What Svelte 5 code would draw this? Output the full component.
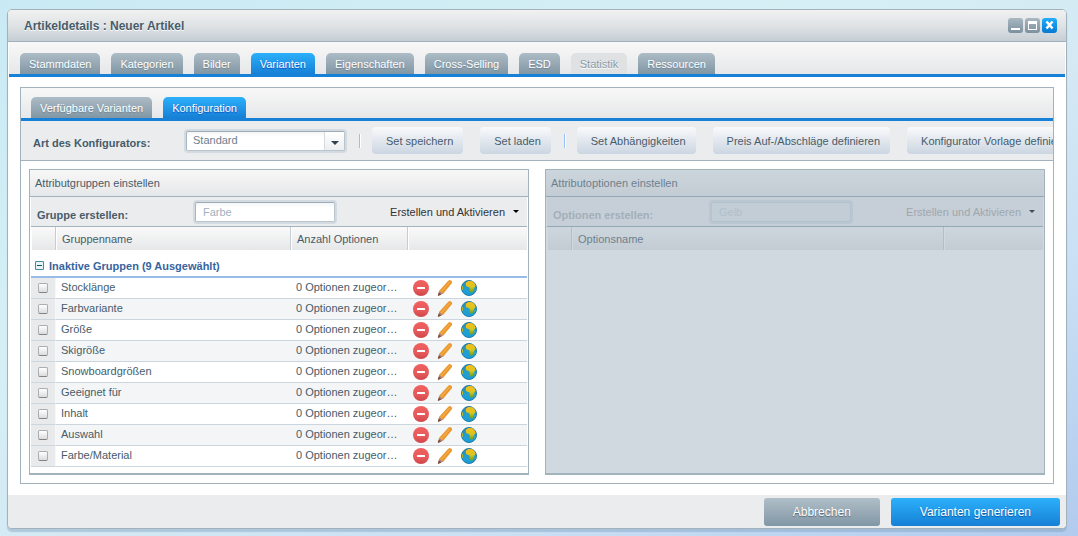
<script>
  const tabs = [
    { label: 'Stammdaten' },
    { label: 'Kategorien' },
    { label: 'Bilder' },
    { label: 'Varianten' },
    { label: 'Eigenschaften' },
    { label: 'Cross-Selling' },
    { label: 'ESD' },
    { label: 'Statistik', disabled: true },
    { label: 'Ressourcen' }
  ];
  const subTabs = ['Verfügbare Varianten', 'Konfiguration'];

  const groups = [
    'Stocklänge',
    'Farbvariante',
    'Größe',
    'Skigröße',
    'Snowboardgrößen',
    'Geeignet für',
    'Inhalt',
    'Auswahl',
    'Farbe/Material'
  ];

  let activeTab = $state('Varianten');
  let activeSubTab = $state('Konfiguration');
  let configurator = $state('Standard');
  let expanded = $state(true);
</script>

<svelte:head>
  <title>Artikeldetails : Neuer Artikel</title>
</svelte:head>

<!-- Shared gradients for the row icons -->
<svg class="defs" width="0" height="0" aria-hidden="true">
  <defs>
    <linearGradient id="red" x1="0" y1="0" x2="0" y2="1">
      <stop offset="0" stop-color="#f0605f" />
      <stop offset="0.6" stop-color="#e65a5c" />
      <stop offset="1" stop-color="#cf4549" />
    </linearGradient>
    <linearGradient id="sea" x1="0" y1="0" x2="0" y2="1">
      <stop offset="0" stop-color="#2683a8" />
      <stop offset="0.5" stop-color="#259fcb" />
      <stop offset="1" stop-color="#169ee0" />
    </linearGradient>
    <linearGradient id="land" x1="0" y1="0" x2="0" y2="1">
      <stop offset="0" stop-color="#f7bd1c" />
      <stop offset="0.5" stop-color="#d9c51d" />
      <stop offset="1" stop-color="#4f9a2d" />
    </linearGradient>
  </defs>
</svg>

<main class="window">
  <header class="window__header">
    <h1 class="window__title">Artikeldetails : Neuer Artikel</h1>
    <div class="window__tools">
      <button class="tool" aria-label="Minimieren">
        <svg width="15" height="15" viewBox="0 0 15 15"><path d="M3 10h9v2H3z" fill="#fff" /></svg>
      </button>
      <button class="tool" aria-label="Maximieren">
        <svg width="15" height="15" viewBox="0 0 15 15"><path fill-rule="evenodd" d="M3 3h9v9H3zM4 6v5h7V6z" fill="#fff" /></svg>
      </button>
      <button class="tool tool--close" aria-label="Schließen">
        <svg width="15" height="15" viewBox="0 0 15 15"><path d="M4.500 3.500l6 7M10.500 3.500l-6 7" stroke="#fff" stroke-width="2.500" /></svg>
      </button>
    </div>
  </header>

  <div class="tabs" role="tablist">
    {#each tabs as tab}
      <button
        class="tab"
        class:tab--active={activeTab === tab.label}
        role="tab"
        aria-selected={activeTab === tab.label}
        disabled={tab.disabled}
        onclick={() => (activeTab = tab.label)}>{tab.label}</button>
    {/each}
  </div>

  <section class="content">
    <div class="tabs tabs--inner" role="tablist">
      {#each subTabs as label}
        <button
          class="tab"
          class:tab--active={activeSubTab === label}
          role="tab"
          aria-selected={activeSubTab === label}
          onclick={() => (activeSubTab = label)}>{label}</button>
      {/each}
    </div>

    <div class="toolbar">
      <label class="label label--wide" for="configurator">Art des Konfigurators:</label>
      <div class="combo">
        <select id="configurator" class="field combo__select" bind:value={configurator}>
          <option>Standard</option>
          <option>Auswahl</option>
          <option>Bild</option>
        </select>
        <span class="combo__trigger"><i class="arrow arrow--large"></i></span>
      </div>
      <span class="separator"></span>
      <button class="button">Set speichern</button>
      <button class="button">Set laden</button>
      <span class="separator"></span>
      <button class="button">Set Abhängigkeiten</button>
      <button class="button">Preis Auf-/Abschläge definieren</button>
      <button class="button">Konfigurator Vorlage definieren</button>
    </div>

    <div class="panels">
      <section class="panel">
        <h2 class="panel__title">Attributgruppen einstellen</h2>
        <div class="panel__bar">
          <label class="label" for="group">Gruppe erstellen:</label>
          <input id="group" class="field" type="text" placeholder="Farbe" />
          <button class="create">Erstellen und Aktivieren <i class="arrow"></i></button>
        </div>
        <table class="grid">
          <colgroup>
            <col class="col-check" />
            <col />
            <col class="col-count" />
            <col class="col-actions" />
          </colgroup>
          <thead>
            <tr>
              <th></th>
              <th>Gruppenname</th>
              <th>Anzahl Optionen</th>
              <th></th>
            </tr>
          </thead>
          <tbody>
            <tr>
              <td class="grid__group" colspan="4">
                <button class="toggle" aria-expanded={expanded} onclick={() => (expanded = !expanded)}>
                  <svg width="9" height="9" viewBox="0 0 9 9">
                    <path d="M.5.5h8v8h-8z" fill="#e6f4f6" stroke="#4b8a9c" />
                    <path d="M2 4h5v1H2z" fill="#1f5266" />
                    {#if !expanded}<path d="M4 2h1v5H4z" fill="#1f5266" />{/if}
                  </svg>
                  Inaktive Gruppen (9 Ausgewählt)
                </button>
              </td>
            </tr>
            {#if expanded}
              {#each groups as group}
                <tr class="row">
                  <td class="row__check"><input type="checkbox" class="check" aria-label={group} /></td>
                  <td class="row__text">{group}</td>
                  <td class="row__text">0 Optionen zugeordnet</td>
                  <td class="row__actions">
                    <div class="actions">
                      <button class="icon" aria-label="Löschen">
                        <svg width="16" height="16" viewBox="0 0 16 16">
                          <circle cx="8" cy="8" r="8" fill="url(#red)" />
                          <rect x="4" y="7" width="8" height="2" rx=".5" fill="#fff" />
                        </svg>
                      </button>
                      <button class="icon" aria-label="Bearbeiten">
                        <svg width="16" height="16" viewBox="0 0 16 16">
                          <path d="M11.300.8Q12.600-.4 14 .5T15 3L6.200 13.800 2.200 10.800z" fill="#ea982e" />
                          <path d="M12.800 1.800L4 12" stroke="#f3ab48" stroke-width="1.200" />
                          <path d="M2.200 10.800l4 3L1 16z" fill="#b08070" />
                          <path d="M1.600 12.500l2.600 2.100L.8 16z" fill="#7a4a3c" />
                        </svg>
                      </button>
                      <button class="icon" aria-label="Übersetzen">
                        <svg width="16" height="16" viewBox="0 0 16 16">
                          <circle cx="8" cy="8" r="7.500" fill="url(#sea)" stroke="#1f7ba5" />
                          <path d="M5 2.500L7.500 1l4 .3 2.200 2.200.9 2.200-1 1.500-1.100 2.300-.6 2.500-1.900 1.300-1.200-2-.1-3.500L7.500 7 5.300 6.300 4.700 4.400z" fill="url(#land)" />
                          <path d="M1 5.500l1 1.500v2.500L1 10zM13.500 10l1-1-.5 2.200z" fill="#b5bb2c" />
                        </svg>
                      </button>
                    </div>
                  </td>
                </tr>
              {/each}
            {/if}
          </tbody>
        </table>
      </section>

      <section class="panel panel--disabled">
        <h2 class="panel__title">Attributoptionen einstellen</h2>
        <div class="panel__bar">
          <label class="label" for="option">Optionen erstellen:</label>
          <input id="option" class="field" type="text" placeholder="Gelb" disabled />
          <button class="create" disabled><span>Erstellen und Aktivieren</span> <i class="arrow"></i></button>
        </div>
        <table class="grid">
          <colgroup>
            <col class="col-check" />
            <col />
            <col class="col-tools" />
          </colgroup>
          <thead>
            <tr>
              <th></th>
              <th>Optionsname</th>
              <th></th>
            </tr>
          </thead>
        </table>
        <div class="panel__mask"></div>
      </section>
    </div>
  </section>

  <footer class="footer">
    <button class="action">Abbrechen</button>
    <button class="action action--primary">Varianten generieren</button>
  </footer>
</main>

<style>
  :global(body) {
    min-height: 100vh;
    overflow: hidden;
    background: linear-gradient(155deg, #c9eaf4 0%, #d6eff5 35%, #d4e9f4 55%, #c9dff4 75%, #b2cbee 100%);
  }

  :global(#app) {
    display: flow-root;
  }

  .defs {
    position: absolute;
  }

  .window,
  .window button,
  .window input,
  .window select {
    box-sizing: border-box;
    font-family: 'Liberation Sans', Arial, sans-serif;
    font-size: 11px;
    color: #475c6a;
  }

  .window button {
    margin: 0;
    border: 0;
    white-space: nowrap;
    cursor: pointer;
  }

  .window button:disabled {
    cursor: default;
  }

  .window {
    margin: 9px 11px 0 7px;
    background: #fff;
    border: 1px solid #a2b1bb;
    border-radius: 5px;
    box-shadow: 0 3px 1px rgba(120, 155, 185, 0.4);
  }

  .window__header {
    display: flex;
    align-items: center;
    justify-content: space-between;
    height: 31px;
    padding: 0 9px 0 16px;
    background: linear-gradient(#f1f1f1, #dfe3e5 50%, #c5ced5);
    border-bottom: 1px solid #a2b1bb;
    border-radius: 4px 4px 0 0;
  }

  .window__title {
    margin: 0;
    font-size: 12px;
    font-weight: bold;
    text-shadow: 0 1px 0 #fff;
  }

  .window__tools {
    display: flex;
    gap: 2px;
  }

  .window .tool {
    width: 15px;
    height: 15px;
    padding: 0;
    border-radius: 3px;
    background: linear-gradient(#a9b8c2, #7b909e);
  }

  .window .tool--close {
    background: linear-gradient(#22aefa, #0878d2);
  }

  .tool svg,
  .icon svg {
    display: block;
  }

  /* Tabs */
  .tabs {
    display: flex;
    align-items: flex-end;
    gap: 11px;
    height: 32px;
    margin: 0 1px;
    padding: 0 11px;
    background: linear-gradient(#f8f8f8, #e6e7e9);
    border-bottom: 3px solid #1681d6;
  }

  .tabs--inner {
    height: 30px;
    margin: 0;
    padding: 0 10px;
  }

  .window .tab {
    height: 21px;
    padding: 0 9px;
    border-radius: 5px 5px 0 0;
    background: linear-gradient(#adbcc6, #8196a4);
    color: #fff;
    text-shadow: 0 1px 1px #6f8595;
  }

  .window .tab--active {
    background: linear-gradient(#2cb0fa, #1680d6);
    text-shadow: 0 1px 1px #0a4fc4;
  }

  .window .tab:disabled {
    background: #e0e1e3;
    color: #8b9ba7;
    text-shadow: 0 1px 0 #fff;
  }

  .content {
    margin: 10px 12px 11px;
    border: 1px solid #a2b3be;
  }

  /* Configurator toolbar */
  .toolbar {
    display: flex;
    align-items: center;
    padding: 6px 0 6px 12px;
    overflow: hidden;
    background: #ebecee;
    border-bottom: 1px solid #a2b3be;
  }

  .label {
    flex: none;
    width: 158px;
    padding-top: 6px;
    font-weight: bold;
  }

  .label--wide {
    width: 153px;
    padding-top: 4px;
  }

  .window .field {
    width: 140px;
    height: 20px;
    margin: 0;
    padding: 0 7px;
    border: 1px solid #b9c4cd;
    border-top-color: #9dabb7;
    border-left-color: #a8b5c0;
    border-radius: 2px;
    outline: 0;
    background: linear-gradient(#f4f5f6, #fff 5px);
    box-shadow: 0 0 0 2px #d3dae1;
    color: #6a7f90;
  }

  .field::placeholder {
    color: #9db3c1;
    opacity: 1;
  }

  .combo {
    position: relative;
    flex: none;
    margin-right: 1px;
  }

  .window .combo__select {
    display: block;
    width: 159px;
    padding: 0 24px 2px 6px;
    appearance: none;
  }

  .combo__trigger {
    position: absolute;
    top: 1px;
    right: 1px;
    bottom: 1px;
    display: grid;
    place-items: center;
    width: 20px;
    padding-top: 4px;
    box-sizing: border-box;
    border-left: 1px solid #d5dadf;
    background: linear-gradient(#fff, #eceef0);
    pointer-events: none;
  }

  .arrow {
    display: inline-block;
    border: 3px solid transparent;
    border-top-color: #000;
    border-bottom: 0;
  }

  .arrow--large {
    border-width: 4px;
    border-bottom: 0;
    border-top-color: #33414c;
  }

  .separator {
    flex: none;
    width: 1px;
    height: 14px;
    margin: 0 11px 0 13px;
    background: #98c0f4;
    border-right: 1px solid #fff;
  }

  .window .button {
    flex: none;
    height: 27px;
    padding: 0 10px 0 14px;
    border-radius: 4px;
    background: linear-gradient(#f9fafb, #e2e7ee 50%, #cbd6e2);
  }

  .button + .button {
    margin-left: 17px;
  }

  /* Group and option panels */
  .panels {
    display: grid;
    grid-template-columns: 1fr 1fr;
    gap: 16px;
    padding: 8px;
  }

  .panel {
    position: relative;
    padding: 0 1px 6px;
    border: 1px solid #a2b3be;
    border-bottom-width: 2px;
  }

  .panel__title {
    margin: 0 -1px;
    padding: 0 5px;
    font-size: 11px;
    font-weight: normal;
    line-height: 26px;
    background: linear-gradient(#f8f8f8, #e6e7e9);
    border-bottom: 1px solid #a2b3be;
  }

  .panel__bar {
    display: flex;
    align-items: center;
    height: 29px;
    padding: 0 6px;
    background: #ebecee;
    border-bottom: 1px solid #a2b3be;
  }

  .window .create {
    display: flex;
    align-items: center;
    gap: 8px;
    margin-left: auto;
    padding: 0 2px;
    background: none;
    color: #333;
  }

  .panel__mask {
    position: absolute;
    inset: 0;
    background: rgba(153, 171, 187, 0.45);
  }

  .panel--disabled .panel__title,
  .panel--disabled .panel__bar {
    border-bottom-color: #8fa5b3;
  }

  .panel--disabled .label,
  .panel--disabled .create span {
    opacity: 0.4;
  }

  .window .panel--disabled .field {
    border-color: #cdd8df;
    background: #e3e9ed;
    box-shadow: 0 0 0 2px #d5dde3;
  }

  .panel--disabled .field::placeholder {
    color: #c3d0d9;
  }

  .grid {
    width: 100%;
    table-layout: fixed;
    border-collapse: separate;
    border-spacing: 0;
  }

  .col-check {
    width: 25px;
  }

  .col-count {
    width: 117px;
  }

  .col-actions {
    width: 119px;
  }

  .col-tools {
    width: 99px;
  }

  .grid th {
    box-sizing: border-box;
    height: 23px;
    padding: 0 5px;
    font-weight: normal;
    text-align: left;
    background: linear-gradient(#fafafa, #e6e7e9);
    border-left: 1px solid #fff;
    border-right: 1px solid #c5cdd4;
  }

  .grid th:last-child {
    border-right: 0;
  }

  .grid td {
    box-sizing: border-box;
    height: 21px;
    padding: 0 5px;
    overflow: hidden;
    text-overflow: ellipsis;
    white-space: nowrap;
    border-bottom: 1px solid #ccd6de;
  }

  .grid .grid__group {
    height: 28px;
    padding: 5px 4px 0;
    border-bottom: 2px solid #99bbe8;
  }

  .window .toggle {
    display: flex;
    align-items: center;
    gap: 5px;
    padding: 0;
    background: none;
    color: #3764a0;
    font-weight: bold;
  }

  .row:nth-child(odd) {
    background: #f3f5f7;
  }

  .grid .row__text {
    padding-bottom: 2px;
  }

  .grid .row__check {
    background: #e9eaec;
    border-right: 1px solid #f6f7f8;
    text-overflow: clip;
  }

  .grid .row__actions {
    text-overflow: clip;
  }

  .check {
    display: block;
    width: 10px;
    height: 10px;
    margin: 0 0 0 2px;
    appearance: none;
    border: 1px solid #a9aeb2;
    border-bottom-color: #7f8487;
    border-radius: 2px;
    background: linear-gradient(#fff, #dcdcdc);
  }

  .check:checked {
    background: #1681d6;
  }

  .actions {
    display: flex;
    gap: 8px;
  }

  .window .icon {
    padding: 0;
    background: none;
  }

  /* Footer */
  .footer {
    display: flex;
    justify-content: flex-end;
    gap: 11px;
    padding: 3px 6px 2px;
    background: #ebecee;
    border-radius: 0 0 4px 4px;
  }

  .window .action {
    height: 28px;
    padding: 0 29px;
    border-radius: 3px;
    background: linear-gradient(#b0bfc9, #8196a4);
    color: #fff;
    font-size: 12px;
    text-shadow: 0 1px 1px #50687a;
  }

  .window .action--primary {
    background: linear-gradient(#2cb0fa, #1680d6);
    text-shadow: 0 1px 1px #0a56a6;
  }
</style>
